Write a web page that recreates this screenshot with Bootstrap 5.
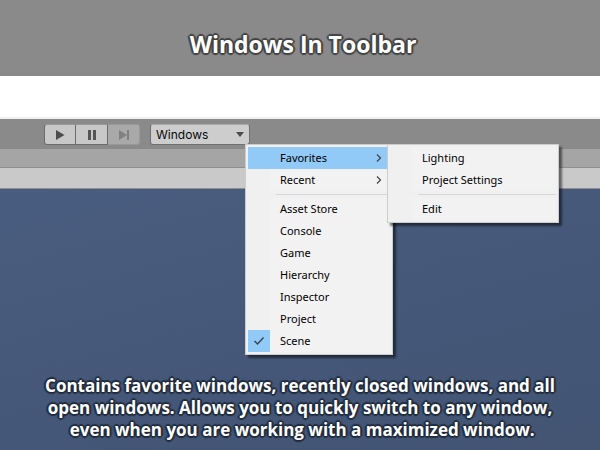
<!DOCTYPE html>
<html lang="en">
<head>
<meta charset="utf-8">
<meta name="viewport" content="width=device-width, initial-scale=1">
<title>Windows In Toolbar</title>
<link href="https://cdn.jsdelivr.net/npm/bootstrap@5.3.0/dist/css/bootstrap.min.css" rel="stylesheet">
<style>
  body { font-family: "Open Sans", "Noto Sans", sans-serif; background: #455878; color: #000; }
  .banner { height: 76px; padding: 12px 0 0 6px; background: #8a8a8a; }
  .outlined { color: #fff; font-weight: 700; }
  .banner h1 { font-size: 23px; line-height: 30px; margin: 0;
    text-shadow: 2px 0 1px #444, -2px 0 1px #444, 0 2px 1px #444, 0 -2px 1px #444, 1px 1px 1px #444, -1px -1px 1px #444, 1px -1px 1px #444, -1px 1px 1px #444; }
  .spacer { height: 43px; background: #fff; border-bottom: 2px solid #f0f0f0; }
  .toolbar { height: 30px; padding: 5px 0 0 44px; background: #8a8a8a; }
  .tool { width: 32px; height: 21px; background: #c8c8c8; border: 1px solid #6b6b6b; border-top-color: #999; border-radius: 0; }
  .tool + .tool { border-left-width: 0; }
  .tool:first-child { border-radius: 3px 0 0 3px; }
  .tool:last-child { border-radius: 0 3px 3px 0; }
  .tool:disabled { background: #a9a9a9; border-color: #999; opacity: 1; }
  .tool svg { display: block; }
  .picker { margin-left: 10px; }
  .picker-btn { width: 100px; height: 21px; padding: 0 5px; font: 12px/19px Inter, sans-serif; color: #090909;
    background: #cdcdcd; border: 1px solid #707070; border-top-color: #aaa; border-radius: 3px; }
  .tabs { height: 19px; background: #a5a5a5; border-bottom: 1px solid #8f8f8f; }
  .subbar { height: 21px; background: #c9c9c9; border-bottom: 1px solid #8f8f8f; }
  .scene { min-height: 261px; padding-top: 186px; background: linear-gradient(165deg, #495d80, #455778 60%, #435573); }
  .scene p { font-size: 17px; line-height: 22px; margin: 0;
    text-shadow: 2px 0 1px #222d3e, -2px 0 1px #222d3e, 0 2px 1px #222d3e, 0 -2px 1px #222d3e, 1px 1px 1px #222d3e, -1px -1px 1px #222d3e, 1px -1px 1px #222d3e, -1px 1px 1px #222d3e; }
  .popup { padding: 2px; background: #f0f0f0; border: 1px solid #ccc; box-shadow: 3px 3px 2px rgba(0,0,0,.5); z-index: 10; }
  .popup-main { width: 148px; top: 20px; left: 95px; }
  .popup-sub { width: 172px; top: -3px; left: 139px; }
  .entry { height: 22px; width: 100%; padding: 0 8px 0 0; font: 11px/22px "Noto Sans", sans-serif; background: #f2f2f2; border: 0; color: #000; text-align: left; }
  .entry .slot { width: 22px; height: 22px; margin-right: 10px; flex: none; background: #f0f0f0; }
  .entry.active-entry, .entry.active-entry .slot, .entry .slot.checked { background: #91c9f7; }
  .rule { height: 7px; margin-left: 28px; padding-top: 3px; }
  .rule::before { content: ""; display: block; height: 1px; background: #d7d7d7; }
</style>
<script src="https://cdn.jsdelivr.net/npm/bootstrap@5.3.0/dist/js/bootstrap.bundle.min.js"></script>
</head>
<body>
<header class="banner d-flex align-items-center justify-content-center">
  <h1 class="outlined">Windows In Toolbar</h1>
</header>
<div class="spacer"></div>
<div class="toolbar d-flex align-items-start">
  <div class="d-flex" role="group" aria-label="Playback">
    <button type="button" class="tool d-flex align-items-center justify-content-center p-0" aria-label="Play"><svg width="10" height="12"><path d="M1 1 9.500 6 1 11z" fill="#4d4d4d"/></svg></button>
    <button type="button" class="tool d-flex align-items-center justify-content-center p-0" aria-label="Pause"><svg width="10" height="12"><path d="M1 1h3v10H1zM6 1h3v10H6z" fill="#555"/></svg></button>
    <button type="button" class="tool d-flex align-items-center justify-content-center p-0" aria-label="Step" disabled><svg width="12" height="12"><path d="M1 1 9 6 1 11zM9 1h2v10H9z" fill="#808080"/></svg></button>
  </div>
  <div class="picker position-relative">
    <button type="button" class="picker-btn d-flex align-items-center justify-content-between" aria-haspopup="menu" aria-expanded="true">Windows<svg width="8" height="5"><path d="M0 0h8L4 5z" fill="#4b4b4b"/></svg></button>
    <div class="popup popup-main position-absolute" role="menu">
      <div class="position-relative">
        <button type="button" class="entry active-entry d-flex align-items-center" role="menuitem"><span class="slot"></span><span class="flex-grow-1">Favorites</span><svg width="6" height="8"><path d="M1 .5 4.500 4 1 7.500" fill="none" stroke="#444" stroke-width="1.200"/></svg></button>
        <div class="popup popup-sub position-absolute" role="menu">
          <button type="button" class="entry d-flex" role="menuitem"><span class="slot"></span>Lighting</button>
          <button type="button" class="entry d-flex" role="menuitem"><span class="slot"></span>Project Settings</button>
          <div class="rule"></div>
          <button type="button" class="entry d-flex" role="menuitem"><span class="slot"></span>Edit</button>
        </div>
      </div>
      <button type="button" class="entry d-flex align-items-center" role="menuitem"><span class="slot"></span><span class="flex-grow-1">Recent</span><svg width="6" height="8"><path d="M1 .5 4.500 4 1 7.500" fill="none" stroke="#444" stroke-width="1.200"/></svg></button>
      <div class="rule"></div>
      <button type="button" class="entry d-flex" role="menuitem"><span class="slot"></span>Asset Store</button>
      <button type="button" class="entry d-flex" role="menuitem"><span class="slot"></span>Console</button>
      <button type="button" class="entry d-flex" role="menuitem"><span class="slot"></span>Game</button>
      <button type="button" class="entry d-flex" role="menuitem"><span class="slot"></span>Hierarchy</button>
      <button type="button" class="entry d-flex" role="menuitem"><span class="slot"></span>Inspector</button>
      <button type="button" class="entry d-flex" role="menuitem"><span class="slot"></span>Project</button>
      <button type="button" class="entry d-flex" role="menuitemcheckbox" aria-checked="true"><span class="slot checked d-flex align-items-center justify-content-center"><svg width="12" height="10"><path d="M1.500 5 4.500 8 10.500 1.500" fill="none" stroke="#3a4650" stroke-width="1.500"/></svg></span>Scene</button>
    </div>
  </div>
</div>
<div class="tabs"></div>
<div class="subbar"></div>
<main class="scene text-center">
  <p class="outlined">Contains favorite windows, recently closed windows, and all<br>open windows. Allows you to quickly switch to any window,<br>&nbsp;even when you are working with a maximized window.</p>
</main>
</body>
</html>
